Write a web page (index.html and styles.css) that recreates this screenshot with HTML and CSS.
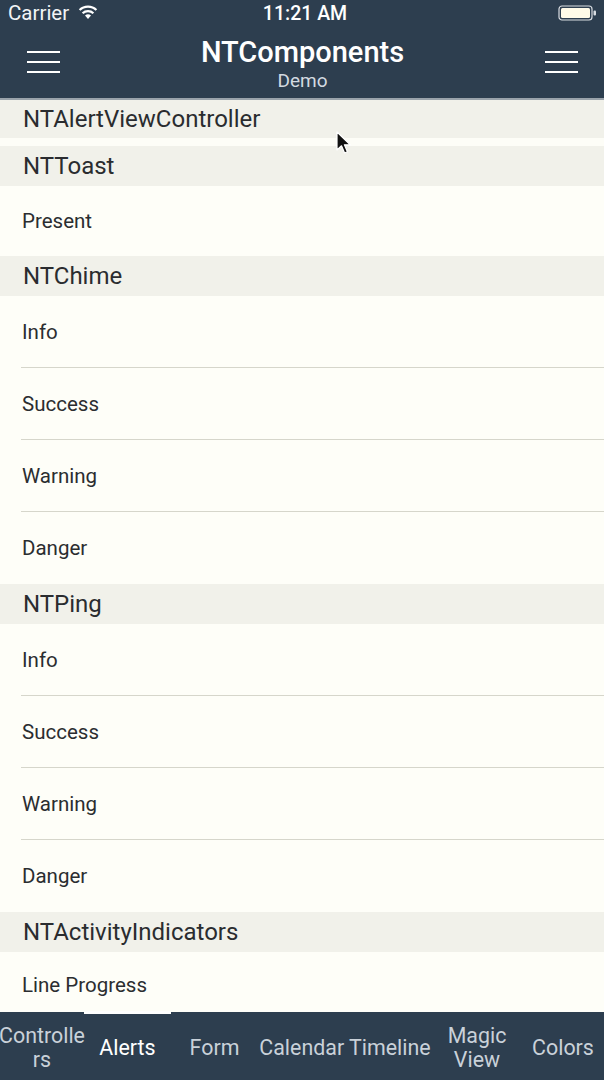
FILE: index.html
```html
<!DOCTYPE html>
<html>
<head>
<meta charset="utf-8">
<link rel="stylesheet" href="styles.css">
</head>
<body>
<div class="app">
  <header class="topbar">
    <div class="status">
      <div class="status-left">
        <span class="carrier">Carrier</span>
        <svg class="wifi" width="20" height="15" viewBox="0 0 20 15">
          <path d="M10 14 L7 10.6 A4.6 4.6 0 0 1 13 10.6 Z" fill="#fff"/>
          <path d="M4.6 8.2 A7.8 7.8 0 0 1 15.4 8.2" stroke="#fff" stroke-width="2.2" fill="none"/>
          <path d="M1.6 5 A12 12 0 0 1 18.4 5" stroke="#fff" stroke-width="2.2" fill="none"/>
        </svg>
      </div>
      <div class="time">11:21 AM</div>
      <div class="status-right">
        <svg width="40" height="18" viewBox="0 0 40 18">
          <rect x="1" y="2" width="33" height="14" rx="3" fill="none" stroke="#d9dde2" stroke-width="1.2"/>
          <rect x="3" y="4" width="29" height="10" rx="1.5" fill="#fffbe8"/>
          <rect x="35.5" y="6.5" width="2.5" height="5" rx="1" fill="#d9dde2"/>
        </svg>
      </div>
    </div>
    <div class="navbar">
      <div class="burger"><span></span><span></span><span></span></div>
      <div class="titles">
        <div class="title">NTComponents</div>
        <div class="subtitle">Demo</div>
      </div>
      <div class="burger"><span></span><span></span><span></span></div>
    </div>
  </header>

  <main class="list">
    <div class="section-header first">NTAlertViewController</div>
    <div class="spacer"></div>
    <div class="section-header">NTToast</div>
    <div class="row short">Present</div>
    <div class="section-header">NTChime</div>
    <div class="row sep">Info</div>
    <div class="row sep">Success</div>
    <div class="row sep">Warning</div>
    <div class="row">Danger</div>
    <div class="section-header">NTPing</div>
    <div class="row sep">Info</div>
    <div class="row sep">Success</div>
    <div class="row sep">Warning</div>
    <div class="row">Danger</div>
    <div class="section-header">NTActivityIndicators</div>
    <div class="row last">Line Progress</div>
  </main>

  <nav class="tabbar">
    <div class="tab">Controlle<br>rs</div>
    <div class="tab active">Alerts</div>
    <div class="tab">Form</div>
    <div class="tab">Calendar Timeline</div>
    <div class="tab">Magic<br>View</div>
    <div class="tab">Colors</div>
  </nav>

  <svg class="cursor" width="16" height="26" viewBox="0 0 16 26">
    <path d="M1 1 L1 19 L5.5 14.8 L8.6 22 L11.4 20.8 L8.4 13.8 L14.2 13.8 Z" fill="#111" stroke="#fff" stroke-width="1.2" stroke-linejoin="round"/>
  </svg>
</div>
</body>
</html>
```

FILE: styles.css
```css
* { box-sizing: border-box; }
html, body { margin: 0; padding: 0; }
body {
  width: 604px;
  height: 1080px;
  overflow: hidden;
  font-family: Roboto, "Noto Sans", "Liberation Sans", sans-serif;
  background: #fefef8;
}
.app {
  position: relative;
  width: 604px;
  height: 1080px;
  display: flex;
  flex-direction: column;
  overflow: hidden;
}
.topbar {
  background: #2d3e4f;
  height: 100px;
  flex: 0 0 100px;
  border-bottom: 2px solid #9aa3ab;
  color: #fff;
}
.status {
  height: 26px;
  display: flex;
  align-items: center;
  justify-content: space-between;
  padding: 0 6px 0 8px;
  position: relative;
}
.status-left { display: flex; align-items: center; gap: 9px; }
.carrier { font-size: 20.5px; color: #f2f4f6; }
.wifi { margin-top: -2px; }
.time {
  position: absolute;
  left: 0; right: 0;
  text-align: center;
  font-size: 19.5px;
  font-weight: 500;
  padding-left: 6px;
}
.status-right { display: flex; align-items: center; }
.navbar {
  height: 72px;
  display: flex;
  align-items: center;
  justify-content: space-between;
  padding: 0 26px 0 27px;
}
.burger {
  width: 33px;
  display: flex;
  flex-direction: column;
  gap: 8px;
}
.burger span {
  display: block;
  height: 2px;
  background: #ffffff;
}
.titles {
  text-align: center;
  margin-top: 4px;
}
.title {
  font-size: 29px;
  font-weight: 500;
  line-height: 32px;
  color: #ffffff;
}
.subtitle {
  font-size: 19px;
  line-height: 22px;
  color: #d3dae1;
  margin-top: 2px;
}
.list {
  flex: 1 1 auto;
  overflow: hidden;
  color: #2b2d30;
}
.section-header {
  height: 40px;
  background: #f1f1ea;
  display: flex;
  align-items: center;
  padding-left: 23px;
  font-size: 24px;
  color: #2a2c2f;
}
.section-header.first { height: 38px; }
.spacer { height: 8px; background: #fdfdf7; }
.row {
  height: 72px;
  display: flex;
  align-items: center;
  padding-left: 22px;
  font-size: 20.5px;
  color: #2b2d30;
  background: #fefef8;
  position: relative;
}
.row.short { height: 70px; }
.row.last { padding-bottom: 6px; }
.row.sep::after {
  content: "";
  position: absolute;
  left: 21px;
  right: 0;
  bottom: 0;
  height: 1px;
  background: #d6d6cb;
}
.tabbar {
  flex: 0 0 68px;
  height: 68px;
  background: #2d3e4f;
  display: grid;
  grid-template-columns: 84px 87px 87px 174px 90px 82px;
  align-items: center;
  position: relative;
}
.tab {
  text-align: center;
  font-size: 21.4px;
  line-height: 23.5px;
  color: #c9d1d9;
  white-space: nowrap;
  position: relative;
  height: 100%;
  display: flex;
  align-items: center;
  justify-content: center;
  padding-top: 3px;
}
.tab.active { color: #ffffff; }
.tab.active::before {
  content: "";
  position: absolute;
  top: -1px;
  left: 0;
  right: 0;
  height: 3px;
  background: #ffffff;
}
.cursor {
  position: absolute;
  left: 336px;
  top: 131px;
}
```
